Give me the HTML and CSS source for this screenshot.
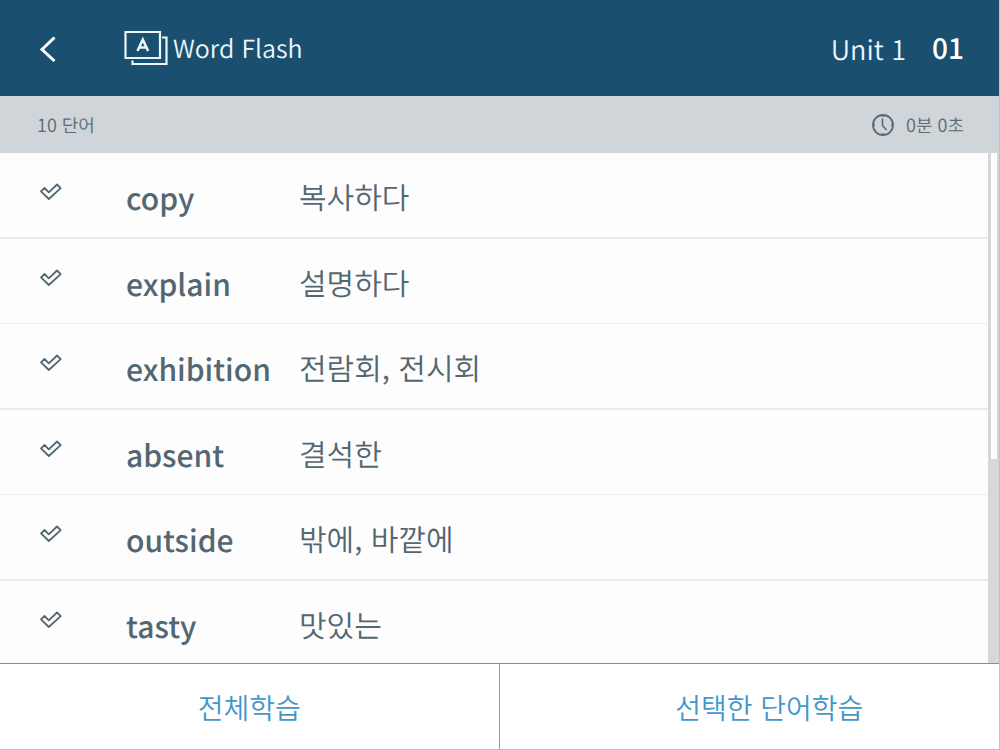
FILE: index.html
```html
<!DOCTYPE html>
<html lang="ko">
<head>
    <meta charset="UTF-8">
    <meta name="viewport" content="width=device-width, initial-scale=1.0">
    <title>Word Flash</title>
    <link rel="stylesheet" href="styles.css">
</head>
<body>

    <header class="header">
        <button class="back" type="button" aria-label="Back">
            <svg width="18" height="28" viewBox="0 0 18 28"><path d="M15.500 3.500 3 15.500l12.500 11.500" fill="none" stroke="currentColor" stroke-width="3"/></svg>
        </button>
        <svg class="logo" width="44" height="36" viewBox="0 0 44 36" fill="none" stroke="currentColor" stroke-width="2.200">
            <path d="M1.500 2h34.500v26H1.500z"/>
            <path d="M38 7.500h4.500v26.500H8.500V30.500"/>
            <path d="m13.500 21 5.300-11.500 5.300 11.500M15.500 17.500h6.600" stroke-width="2.600"/>
        </svg>
        <h1>Word Flash</h1>
        <span class="unit">Unit 1</span>
        <span class="number">01</span>
    </header>

    <div class="info">
        <span>10 단어</span>
        <span class="timer">
            <svg width="24" height="24" viewBox="0 0 24 24" fill="none" stroke="currentColor" stroke-width="1.800">
                <circle cx="12" cy="12" r="10"/>
                <path d="M11.500 5.500v7l4 4.500M12 2v2M12 20v2M2 12h2M20 12h2" stroke-width="1.600"/>
            </svg>
            0분 0초
        </span>
    </div>

    <!-- shared tick outline -->
    <svg width="0" height="0" class="defs">
        <symbol id="tick" viewBox="0 0 24 18">
            <path d="M2 8.300 5.500 5l4.300 4.300L18 1.500 21.700 5.200 9.800 16z" fill="none" stroke="currentColor" stroke-width="1.800" stroke-linejoin="round"/>
        </symbol>
    </svg>

    <main class="words">
        <div class="scroll">
            <table>
                <tr>
                    <td class="check"><label><input type="checkbox" aria-label="copy"><svg width="24" height="18"><use href="#tick"/></svg></label></td>
                    <th scope="row">copy</th>
                    <td>복사하다</td>
                </tr>
                <tr>
                    <td class="check"><label><input type="checkbox" aria-label="explain"><svg width="24" height="18"><use href="#tick"/></svg></label></td>
                    <th scope="row">explain</th>
                    <td>설명하다</td>
                </tr>
                <tr>
                    <td class="check"><label><input type="checkbox" aria-label="exhibition"><svg width="24" height="18"><use href="#tick"/></svg></label></td>
                    <th scope="row">exhibition</th>
                    <td>전람회, 전시회</td>
                </tr>
                <tr>
                    <td class="check"><label><input type="checkbox" aria-label="absent"><svg width="24" height="18"><use href="#tick"/></svg></label></td>
                    <th scope="row">absent</th>
                    <td>결석한</td>
                </tr>
                <tr>
                    <td class="check"><label><input type="checkbox" aria-label="outside"><svg width="24" height="18"><use href="#tick"/></svg></label></td>
                    <th scope="row">outside</th>
                    <td>밖에, 바깥에</td>
                </tr>
                <tr>
                    <td class="check"><label><input type="checkbox" aria-label="tasty"><svg width="24" height="18"><use href="#tick"/></svg></label></td>
                    <th scope="row">tasty</th>
                    <td>맛있는</td>
                </tr>
            </table>
        </div>
        <div class="track"><div class="thumb"></div></div>
    </main>

    <footer class="actions">
        <button type="button">전체학습</button>
        <button type="button">선택한 단어학습</button>
    </footer>

</body>
</html>
```
FILE: styles.css
```css
* {
    box-sizing: border-box;
}

body {
    margin: 0;
    height: 100vh;
    display: flex;
    flex-direction: column;
    font-family: "Noto Sans CJK KR", sans-serif;
    font-weight: 350;
    text-rendering: geometricPrecision;
    color: #536772;
    background: #fdfdfd;
    border-right: 1px solid #d0c19a;
    border-bottom: 1px solid #cdc28a;
    overflow: hidden;
}

button {
    font: inherit;
    background: none;
    border: none;
    padding: 0;
    cursor: pointer;
}

.header {
    display: flex;
    align-items: center;
    height: 96px;
    padding: 0 35px 0 39px;
    background: #1a4f70;
    color: #e9f6fc;
    font-size: 27px;
    flex-shrink: 0;
}

.back {
    display: flex;
    width: 85px;
    color: #fff;
}

.logo {
    margin-right: 5px;
}

h1 {
    margin: 0;
    font-size: 25px;
    font-weight: 350;
}

.unit {
    margin-left: auto;
}

.number {
    margin-left: 26px;
    color: #fff;
    font-size: 28px;
    font-weight: 500;
}

.info {
    display: flex;
    justify-content: space-between;
    align-items: center;
    height: 57px;
    padding: 0 35px 0 37px;
    background: #cfd5d9;
    color: #5b6a74;
    font-size: 18px;
    flex-shrink: 0;
}

.timer {
    display: flex;
    align-items: center;
    gap: 11px;
}

.defs {
    display: none;
}

.words {
    display: flex;
    flex: 1;
    min-height: 0;
}

.scroll {
    flex: 1;
    overflow: hidden;
}

table {
    width: 100%;
    border-spacing: 0;
}

th,
td {
    height: 86px;
    padding: 2px 0 0 1px;
    border-bottom: 2px solid #e9eaeb;
    text-align: left;
    font-size: 30px;
    font-weight: 350;
    line-height: 40px;
}

tr:nth-child(even) th,
tr:nth-child(even) td {
    height: 85px;
    border-bottom: 1px solid #eeefef;
}

th {
    width: 174px;
    padding: 3px 0 0 2px;
    font-weight: 500;
}

.check {
    width: 124px;
    padding: 30px 0 0 39px;
    vertical-align: top;
    line-height: 0;
}

.check label {
    display: inline-grid;
    cursor: pointer;
}

.check input,
.check svg {
    grid-area: 1 / 1;
    margin: 0;
}

.check input {
    appearance: none;
}

.check input:checked + svg {
    color: #4397c9;
}

.track {
    width: 11px;
    padding: 0 2px 0 3px;
    background: #d7d7d9;
}

.thumb {
    height: 60%;
    background: #fff;
}

.actions {
    display: grid;
    grid-template-columns: 1fr 1fr;
    height: 86px;
    border-top: 1px solid #5f9db8;
    background: #fff;
    flex-shrink: 0;
}

.actions button {
    color: #4397c9;
    font-size: 28px;
}

.actions button:first-child {
    border-right: 1px solid #6fa5bd;
}

.actions button:last-child {
    padding-left: 40px;
}
```
